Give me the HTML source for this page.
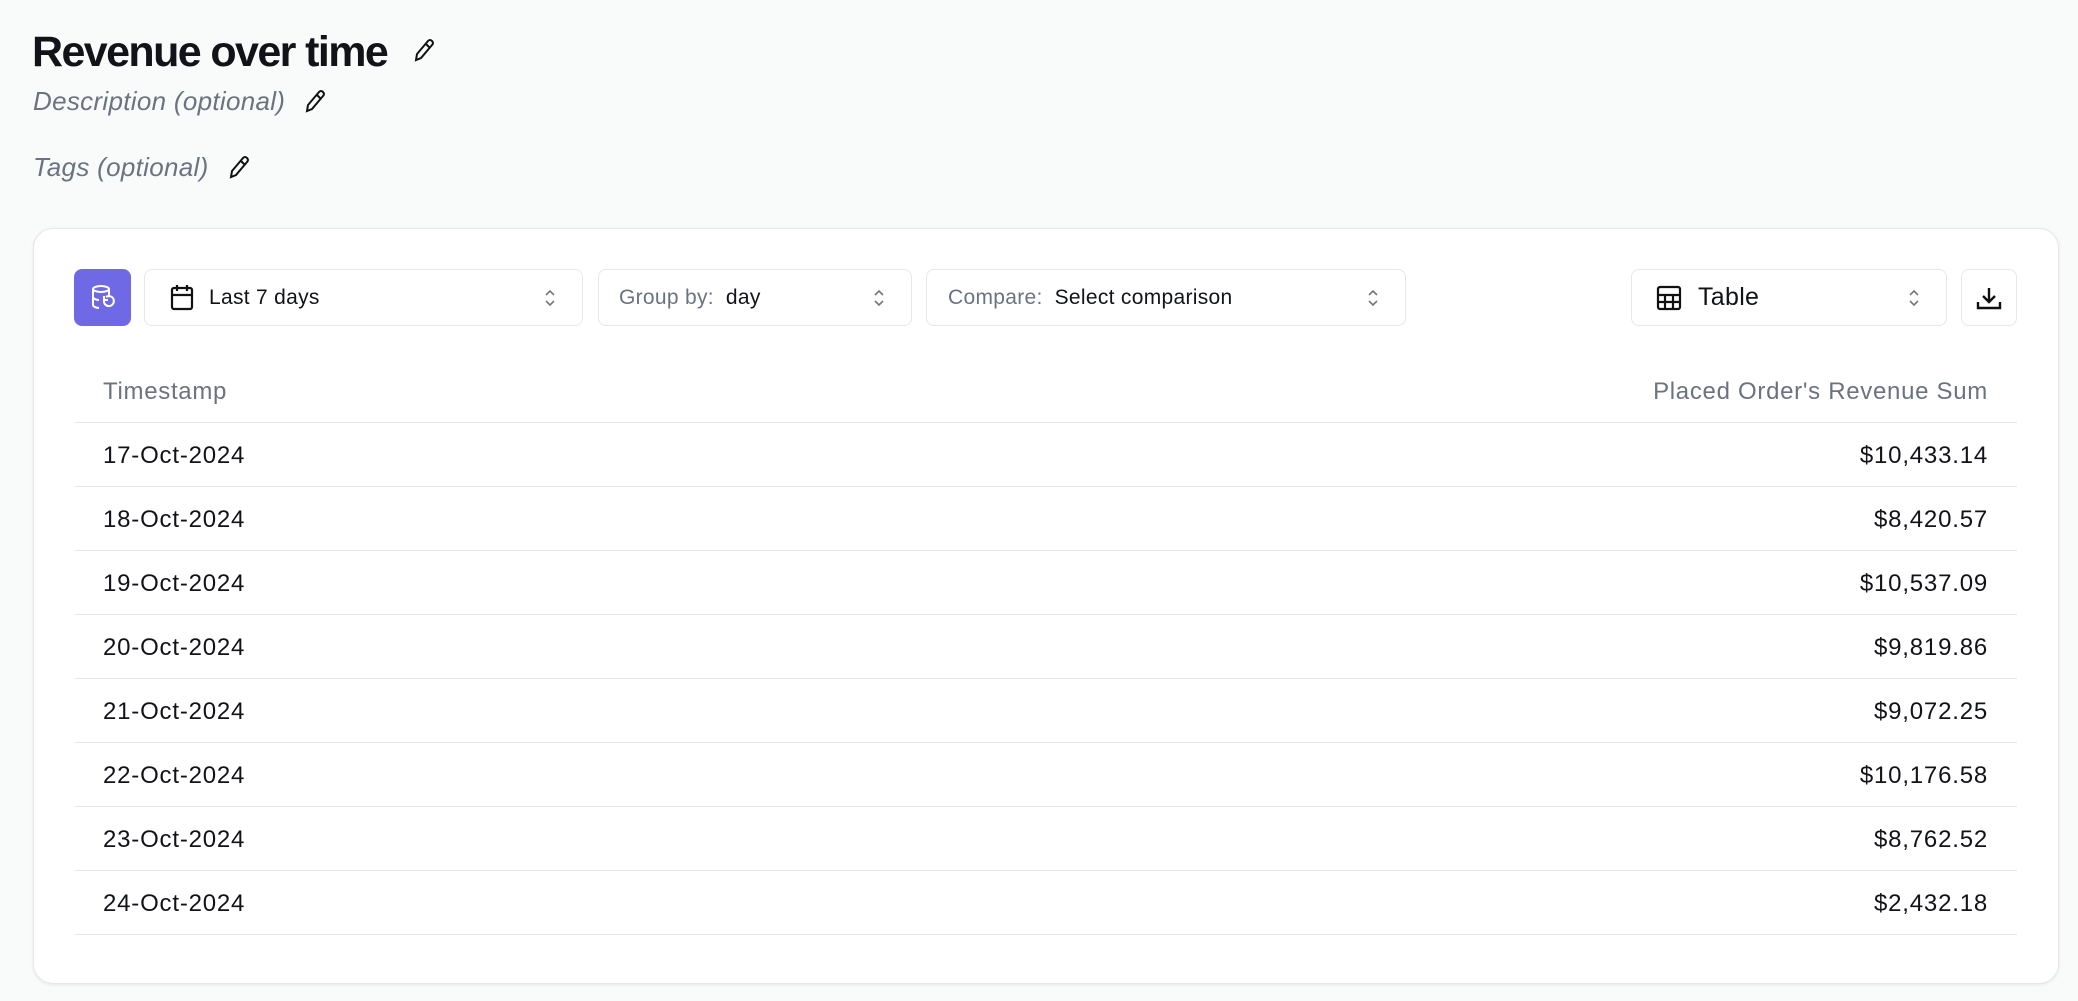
<!DOCTYPE html>
<html><head><meta charset="utf-8"><style>
*{box-sizing:border-box;margin:0;padding:0}
body{width:2078px;height:1001px;background:#f9fafa;font-family:"Liberation Sans",sans-serif;color:#111318;position:relative;overflow:hidden}
.abs{position:absolute}
h1{position:absolute;left:32px;top:26px;font-size:43px;font-weight:bold;letter-spacing:-1.6px;line-height:52px}
.opt{position:absolute;left:33px;font-size:26px;font-style:italic;color:#6b7280;line-height:30px;letter-spacing:0.3px}
.card{position:absolute;left:33px;top:228px;width:2026px;height:756px;background:#fff;border:1px solid #e5e7eb;border-radius:20px;box-shadow:0 1px 3px rgba(0,0,0,.08)}
.sel{position:absolute;top:269px;height:57px;border:1px solid #e5e7eb;border-radius:8px;background:#fff;font-size:21px;display:flex;align-items:center;letter-spacing:0.3px}
.sel .lbl{color:#6b7280;margin-right:12px}
.chev{position:absolute;right:26px;top:18px}
.row{position:absolute;left:74px;width:1943px;height:64px;border-bottom:1px solid #e5e7eb;font-size:24px;line-height:66px;letter-spacing:0.8px}
.row .l{position:absolute;left:29px}
.row .r{position:absolute;right:29px}
.hdr{color:#6b7280;letter-spacing:0.7px}
</style></head><body>
<h1>Revenue over time</h1>
<svg class="abs" style="left:412px;top:38px" width="24" height="26" viewBox="0 0 24 26" fill="none" stroke="#111" stroke-width="2"><path d="M4 22 L5 16 L16 3 Q18 1 20 3 Q22 5 20 7 L9 20 Z M14 6 L18 10"/></svg>
<div class="opt" style="top:86px">Description (optional)</div>
<svg class="abs" style="left:303px;top:89px" width="24" height="26" viewBox="0 0 24 26" fill="none" stroke="#111" stroke-width="2"><path d="M4 22 L5 16 L16 3 Q18 1 20 3 Q22 5 20 7 L9 20 Z M14 6 L18 10"/></svg>
<div class="opt" style="top:152px">Tags (optional)</div>
<svg class="abs" style="left:227px;top:155px" width="24" height="26" viewBox="0 0 24 26" fill="none" stroke="#111" stroke-width="2"><path d="M4 22 L5 16 L16 3 Q18 1 20 3 Q22 5 20 7 L9 20 Z M14 6 L18 10"/></svg>

<div class="card"></div>
<div class="abs" style="left:74px;top:269px;width:57px;height:57px;background:#7069e6;border-radius:8px"></div>
<svg class="abs" style="left:88px;top:283px" width="30" height="30" viewBox="0 0 30 30" fill="none" stroke="#fff" stroke-width="2"><ellipse cx="13" cy="6" rx="8" ry="3"/><path d="M5 6v16c0 1.5 3 3 6 3M21 6v7M5 14c0 1.5 3 3 6 3"/><path d="M16 17a5 5 0 1 0 2-3M16 13v4h4"/></svg>

<div class="sel" style="left:144px;width:439px;padding-left:24px">
<svg width="26" height="28" viewBox="0 0 26 28" fill="none" stroke="#111" stroke-width="2.2"><rect x="3" y="4" width="20" height="21" rx="2"/><path d="M3 11h20M8 1v6M18 1v6"/></svg>
<span style="margin-left:14px">Last 7 days</span>
<svg class="chev" width="12" height="20" viewBox="0 0 12 20" fill="none" stroke="#777" stroke-width="1.6"><path d="M2 7l4-4 4 4M2 13l4 4 4-4"/></svg></div>
<div class="sel" style="left:598px;width:314px;padding-left:20px"><span class="lbl">Group by:</span><span>day</span>
<svg class="chev" width="12" height="20" viewBox="0 0 12 20" fill="none" stroke="#777" stroke-width="1.6"><path d="M2 7l4-4 4 4M2 13l4 4 4-4"/></svg></div>
<div class="sel" style="left:926px;width:480px;padding-left:21px"><span class="lbl">Compare:</span><span>Select comparison</span>
<svg class="chev" width="12" height="20" viewBox="0 0 12 20" fill="none" stroke="#777" stroke-width="1.6"><path d="M2 7l4-4 4 4M2 13l4 4 4-4"/></svg></div>
<div class="sel" style="left:1631px;width:316px;padding-left:24px;font-size:25px">
<svg width="26" height="26" viewBox="0 0 26 26" fill="none" stroke="#111" stroke-width="2.2"><rect x="2" y="2" width="22" height="22" rx="2"/><path d="M2 10h22M2 17h22M9 10v14M17 10v14"/></svg>
<span style="margin-left:16px">Table</span>
<svg class="chev" width="12" height="20" viewBox="0 0 12 20" fill="none" stroke="#777" stroke-width="1.6"><path d="M2 7l4-4 4 4M2 13l4 4 4-4"/></svg></div>
<div class="sel" style="left:1961px;width:56px;justify-content:center">
<svg width="26" height="26" viewBox="0 0 26 26" fill="none" stroke="#111" stroke-width="2.4"><path d="M13 3v14M7 11l6 6 6-6M2 17v6h22v-6"/></svg></div>

<div class="row hdr" style="top:359px"><span class="l">Timestamp</span><span class="r">Placed Order's Revenue Sum</span></div>
<div class="row" style="top:423px"><span class="l">17-Oct-2024</span><span class="r">$10,433.14</span></div>
<div class="row" style="top:487px"><span class="l">18-Oct-2024</span><span class="r">$8,420.57</span></div>
<div class="row" style="top:551px"><span class="l">19-Oct-2024</span><span class="r">$10,537.09</span></div>
<div class="row" style="top:615px"><span class="l">20-Oct-2024</span><span class="r">$9,819.86</span></div>
<div class="row" style="top:679px"><span class="l">21-Oct-2024</span><span class="r">$9,072.25</span></div>
<div class="row" style="top:743px"><span class="l">22-Oct-2024</span><span class="r">$10,176.58</span></div>
<div class="row" style="top:807px"><span class="l">23-Oct-2024</span><span class="r">$8,762.52</span></div>
<div class="row" style="top:871px"><span class="l">24-Oct-2024</span><span class="r">$2,432.18</span></div>
</body></html>
